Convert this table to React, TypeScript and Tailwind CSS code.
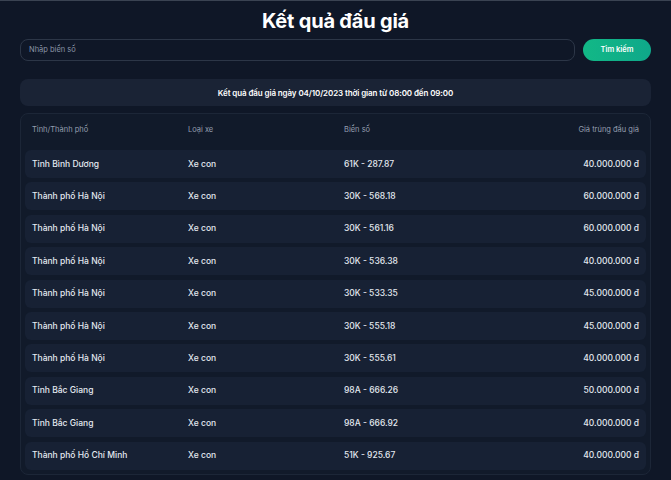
const rows = [
  { city: "Tỉnh Bình Dương", type: "Xe con", plate: "61K - 287.87", price: "40.000.000 đ" },
  { city: "Thành phố Hà Nội", type: "Xe con", plate: "30K - 568.18", price: "60.000.000 đ" },
  { city: "Thành phố Hà Nội", type: "Xe con", plate: "30K - 561.16", price: "60.000.000 đ" },
  { city: "Thành phố Hà Nội", type: "Xe con", plate: "30K - 536.38", price: "40.000.000 đ" },
  { city: "Thành phố Hà Nội", type: "Xe con", plate: "30K - 533.35", price: "45.000.000 đ" },
  { city: "Thành phố Hà Nội", type: "Xe con", plate: "30K - 555.18", price: "45.000.000 đ" },
  { city: "Thành phố Hà Nội", type: "Xe con", plate: "30K - 555.61", price: "40.000.000 đ" },
  { city: "Tỉnh Bắc Giang", type: "Xe con", plate: "98A - 666.26", price: "50.000.000 đ" },
  { city: "Tỉnh Bắc Giang", type: "Xe con", plate: "98A - 666.92", price: "40.000.000 đ" },
  { city: "Thành phố Hồ Chí Minh", type: "Xe con", plate: "51K - 925.67", price: "40.000.000 đ" },
];

export default function App() {
  return (
    <div className="h-[480px] w-full overflow-hidden bg-[#0f1727] font-['Inter',sans-serif] border-t border-[#3a4352]">
      <div className="px-5 pt-[5px]">
        <h1 className="text-center text-[20px] leading-[30px] font-bold text-white tracking-[-0.2px]">
          Kết quả đấu giá
        </h1>

        <div className="mt-[3px] flex items-center gap-2">
          <div className="flex h-[22px] flex-1 items-center rounded-lg border border-[#2c3647] px-2">
            <span className="text-[7.5px] text-[#8a94a6]">Nhập biển số</span>
          </div>
          <button
            type="button"
            className="h-[22px] w-[68px] rounded-full bg-gradient-to-r from-[#12b886] to-[#0fa88a] text-[7.5px] font-semibold text-white"
          >
            Tìm kiếm
          </button>
        </div>

        <div className="mt-[18px] flex h-[27px] items-center justify-center rounded-lg bg-[#1a2335]">
          <span className="text-[8px] font-semibold tracking-[-0.1px] text-white">
            Kết quả đấu giá ngày 04/10/2023 thời gian từ 08:00 đến 09:00
          </span>
        </div>

        <div className="mt-[7px] rounded-lg border border-[#1c2637] bg-[#111a2a] px-1 pb-1">
          <div className="grid h-[32px] grid-cols-[156px_156px_1fr_auto] items-center px-[7px] text-[7.5px] text-[#949eaf]">
            <span>Tỉnh/Thành phố</span>
            <span>Loại xe</span>
            <span>Biển số</span>
            <span className="text-right">Giá trúng đấu giá</span>
          </div>
          <div className="mt-1 flex flex-col gap-[4.4px]">
            {rows.map((r, i) => (
              <div
                key={i}
                className="grid h-[28px] grid-cols-[156px_156px_1fr_auto] items-center rounded-md bg-[#172134] px-[7px] text-[8.5px] font-medium text-[#e4e9f0]"
              >
                <span>{r.city}</span>
                <span>{r.type}</span>
                <span>{r.plate}</span>
                <span className="text-right">{r.price}</span>
              </div>
            ))}
          </div>
        </div>
      </div>
    </div>
  );
}
